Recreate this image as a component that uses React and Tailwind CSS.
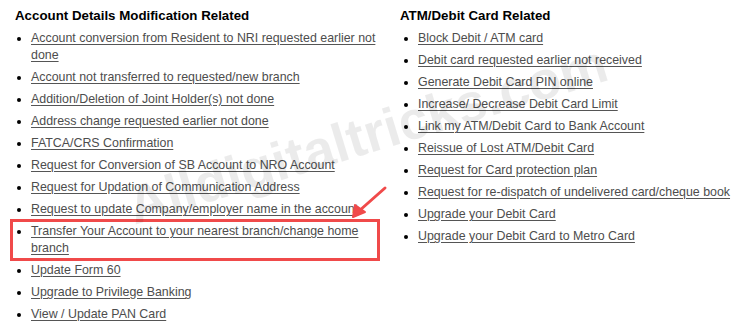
import React from "react";

const accountLinks = [
  "Account conversion from Resident to NRI requested earlier not done",
  "Account not transferred to requested/new branch",
  "Addition/Deletion of Joint Holder(s) not done",
  "Address change requested earlier not done",
  "FATCA/CRS Confirmation",
  "Request for Conversion of SB Account to NRO Account",
  "Request for Updation of Communication Address",
  "Request to update Company/employer name in the account",
  "Transfer Your Account to your nearest branch/change home branch",
  "Update Form 60",
  "Upgrade to Privilege Banking",
  "View / Update PAN Card",
];

const cardLinks = [
  "Block Debit / ATM card",
  "Debit card requested earlier not received",
  "Generate Debit Card PIN online",
  "Increase/ Decrease Debit Card Limit",
  "Link my ATM/Debit Card to Bank Account",
  "Reissue of Lost ATM/Debit Card",
  "Request for Card protection plan",
  "Request for re-dispatch of undelivered card/cheque book",
  "Upgrade your Debit Card",
  "Upgrade your Debit Card to Metro Card",
];

const Section = ({ title, links, width, indent, highlight }) => (
  <div className="pl-[15px] pt-[7px]" style={{ width }}>
    <h2 className="text-[13.3px] leading-[18px] font-bold text-black">{title}</h2>
    <ul
      className="mt-[5px] list-disc text-[12.4px] leading-[17px] text-[#4d4d4d] marker:text-black"
      style={{ paddingLeft: indent }}
    >
      {links.map((l) => (
        <li key={l} className="relative mb-[5px] pr-[8px]">
          <a href="#" className="underline underline-offset-[2px] decoration-[#555]">
            {l}
          </a>
          {l === highlight && (
            <span className="absolute left-[-21px] top-[-4px] bottom-[-4px] w-[370px] border-[3px] border-[#f04a4a]" />
          )}
        </li>
      ))}
    </ul>
  </div>
);

export default function App() {
  return (
    <div
      className="relative w-[751px] h-[328px] bg-white overflow-hidden"
      style={{ fontFamily: '"Liberation Sans", Arial, sans-serif' }}
    >
      <div className="flex">
        <Section
          title="Account Details Modification Related"
          links={accountLinks}
          width={385}
          indent={16}
          highlight="Transfer Your Account to your nearest branch/change home branch"
        />
        <Section title="ATM/Debit Card Related" links={cardLinks} width={366} indent={18} />
      </div>

      {/* watermark */}
      <div className="absolute left-[118px] top-[104px] rotate-[-17deg] text-[54px] leading-[60px] font-bold text-black/[0.08] pointer-events-none whitespace-nowrap">
        Alldigitaltricks.com
      </div>

      {/* arrow */}
      <svg className="absolute left-0 top-0 pointer-events-none" width="751" height="328">
        <line x1="385" y1="188" x2="359" y2="211" stroke="#f04a4a" strokeWidth="3" strokeLinecap="round" />
        <polygon points="353,217 355,205 365,212" fill="#f04a4a" stroke="#f04a4a" strokeWidth="2" strokeLinejoin="round" />
      </svg>
    </div>
  );
}
